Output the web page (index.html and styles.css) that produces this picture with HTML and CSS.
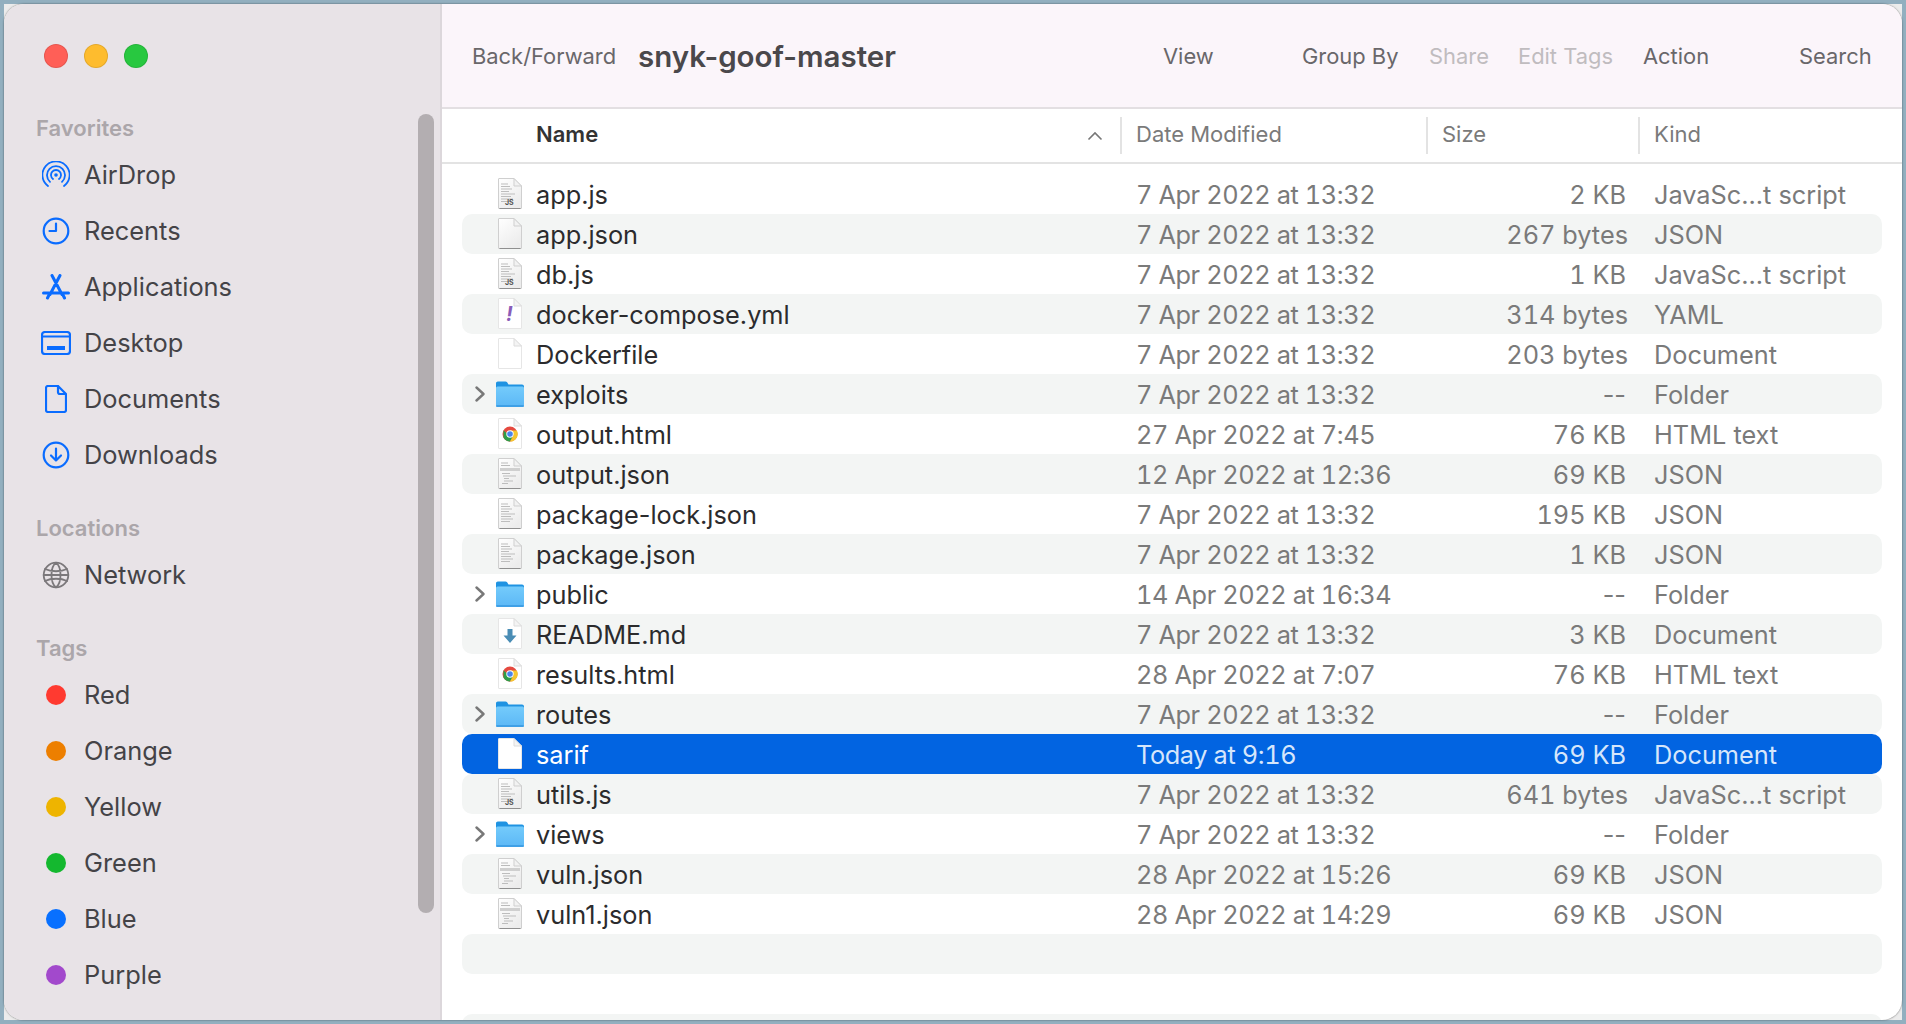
FILE: index.html
```html
<!DOCTYPE html>
<html lang="en">
<head>
<meta charset="utf-8">
<title>snyk-goof-master</title>
<link rel="stylesheet" href="styles.css">
</head>
<body>
<svg class="defs" width="0" height="0" aria-hidden="true">
  <defs>
    <linearGradient id="paper" x1="0" y1="0" x2="0.6" y2="1"><stop offset="0" stop-color="#ffffff"/><stop offset="1" stop-color="#ececec"/></linearGradient>
    <linearGradient id="folderFront" x1="0" y1="0" x2="0" y2="1"><stop offset="0" stop-color="#74cbfb"/><stop offset="1" stop-color="#5cb8f6"/></linearGradient>
    <symbol id="page" viewBox="0 0 24 31">
      <path d="M1 .5H16L23.5 8V30a.5.5 0 0 1-.5.5H1a.5.5 0 0 1-.5-.5V1A.5.5 0 0 1 1 .5Z" fill="url(#paper)" stroke="#cfcfcf"/>
      <path d="M16 .5V8H23.5Z" fill="#f2f2f2" stroke="#cfcfcf" stroke-linejoin="round"/>
      <path d="M1.500 30.500H22.500" stroke="#8f8f8f"/>
    </symbol>
    <symbol id="pagelight" viewBox="0 0 24 31">
      <path d="M1 .5H16L23.5 8V30a.5.5 0 0 1-.5.5H1a.5.5 0 0 1-.5-.5V1A.5.5 0 0 1 1 .5Z" fill="#fff" stroke="#e6e6e6"/>
      <path d="M16 .5V8H23.5Z" fill="#f4f4f4" stroke="#dcdcdc" stroke-linejoin="round"/>
    </symbol>
    <symbol id="folder" viewBox="0 0 28 26">
      <path d="M0 3a2 2 0 0 1 2-2.500H9.500a2 2 0 0 1 1.600.8L12.500 3.500H26a2 2 0 0 1 2 2V10H0Z" fill="#1f93e2"/>
      <rect y="5.500" width="28" height="20" rx="1.500" fill="url(#folderFront)"/>
      <rect y="24" width="28" height="2" rx="1" fill="#3fa0e6"/>
    </symbol>
    <symbol id="chevron" viewBox="0 0 12 16">
      <path d="M2.500 1.500 9.500 8 2.500 14.500" fill="none" stroke="#787878" stroke-width="2.400" stroke-linecap="round" stroke-linejoin="round"/>
    </symbol>
    <symbol id="chrome" viewBox="0 0 24 31">
      <path d="M1 .5H16L23.500 8V30a.5.5 0 0 1-.5.500H1a.5.5 0 0 1-.5-.5V1A.5.5 0 0 1 1 .5Z" fill="#fff" stroke="#e6e6e6"/>
      <path d="M16 .5V8H23.5Z" fill="#f4f4f4" stroke="#dcdcdc" stroke-linejoin="round"/>
      <circle cx="12" cy="16" r="7.500" fill="#e5493f"/>
      <path d="M5.500 12.200 5.500 19.800A7.500 7.500 0 0 0 12 23.500L15.600 17 8.500 15Z" fill="#2e9e49"/>
      <path d="M12 12.500H18.900A7.500 7.500 0 0 1 12 23.500L15.600 17Z" fill="#f6c62f"/>
      <circle cx="12" cy="16" r="3.700" fill="#fff"/>
      <circle cx="12" cy="16" r="2.800" fill="#4a85ee"/>
    </symbol>
    <symbol id="lines" viewBox="0 0 24 31">
      <path d="M3 6h7M3 8.500h9M3 11h11M3 13.500h8M3 16h14M3 18.500h10M3 21h12M3 23.500h9" stroke="#bdbdbd" stroke-width="1" fill="none"/>
    </symbol>
    <symbol id="table" viewBox="0 0 24 31">
      <path d="M3 5h7M3 7.500h9" stroke="#bbb" fill="none"/>
      <rect x="2" y="10" width="20" height="3" fill="#cfcfcf"/>
      <path d="M4 15.500h8M5 18h13M6 20.500h5M6 23h9M4 25.500h6" stroke="#bdbdbd" fill="none"/>
    </symbol>
  </defs>
</svg>
<div class="frame">
<main class="window">
  <aside class="sidebar">
    <div class="lights">
      <span class="light light-close"></span>
      <span class="light light-min"></span>
      <span class="light light-max"></span>
    </div>
    <h2 class="side-label">Favorites</h2>
    <ul class="side-list">
      <li class="side-item"><span class="side-icon"><svg viewBox="0 0 28 28" width="28" height="28" class="glyph glyph-thin"><circle class="solid" cx="14" cy="14" r="1.800"/><path d="M11 18A5 5 0 1 1 17 18M8 20.800A9 9 0 1 1 20 20.800M6 25A13.600 13.600 0 1 1 22 25"/></svg></span>AirDrop</li>
      <li class="side-item"><span class="side-icon"><svg viewBox="0 0 28 28" width="28" height="28" class="glyph"><circle cx="14" cy="14" r="12.300"/><path d="M14 6.500V14H7.500"/></svg></span>Recents</li>
      <li class="side-item"><span class="side-icon"><svg viewBox="0 0 28 26" width="28" height="26" class="glyph glyph-heavy"><path d="M10 1.500 20 20.500M18 1.500 8 20.500M1.500 19H26.500M5.500 24l1.500-3M22.500 24 21 21"/></svg></span>Applications</li>
      <li class="side-item"><span class="side-icon"><svg viewBox="0 0 30 24" width="30" height="24" class="glyph"><rect x="1" y="1" width="28" height="22" rx="3"/><path d="M1 5.500H29" /><rect class="solid" x="6" y="15" width="18" height="4"/></svg></span>Desktop</li>
      <li class="side-item"><span class="side-icon"><svg viewBox="0 0 22 28" width="22" height="28" class="glyph"><path d="M3 1H13L21 9V25a2 2 0 0 1-2 2H3a2 2 0 0 1-2-2V3a2 2 0 0 1 2-2ZM13 1V7a2 2 0 0 0 2 2H21"/></svg></span>Documents</li>
      <li class="side-item"><span class="side-icon"><svg viewBox="0 0 28 28" width="28" height="28" class="glyph"><circle cx="14" cy="14" r="12.300"/><path d="M14 7.500V19.500M9 14.500 14 19.500 19 14.500"/></svg></span>Downloads</li>
    </ul>
    <h2 class="side-label side-label-gap">Locations</h2>
    <ul class="side-list">
      <li class="side-item"><span class="side-icon"><svg viewBox="0 0 28 28" width="28" height="28" class="glyph glyph-grey"><circle cx="14" cy="14" r="12.300"/><path d="M14 1.700C8 6 8 22 14 26.300 20 22 20 6 14 1.700ZM3 8C9 11 19 11 25 8M1.700 14H26.300M3 20C9 17 19 17 25 20"/></svg></span>Network</li>
    </ul>
    <h2 class="side-label side-label-gap">Tags</h2>
    <ul class="side-list">
      <li class="side-item"><span class="side-icon"><span class="dot dot-red"></span></span>Red</li>
      <li class="side-item"><span class="side-icon"><span class="dot dot-orange"></span></span>Orange</li>
      <li class="side-item"><span class="side-icon"><span class="dot dot-yellow"></span></span>Yellow</li>
      <li class="side-item"><span class="side-icon"><span class="dot dot-green"></span></span>Green</li>
      <li class="side-item"><span class="side-icon"><span class="dot dot-blue"></span></span>Blue</li>
      <li class="side-item"><span class="side-icon"><span class="dot dot-purple"></span></span>Purple</li>
    </ul>
    <div class="side-scroll"></div>
  </aside>
  <section class="content">
    <header class="toolbar">
      <span class="tool">Back/Forward</span>
      <span class="title">snyk-goof-master</span>
      <span class="tool">View</span>
      <span class="tool">Group By</span>
      <span class="tool tool-off">Share</span>
      <span class="tool tool-off">Edit Tags</span>
      <span class="tool">Action</span>
      <span class="tool">Search</span>
    </header>
    <div class="columns">
      <div class="col col-name">Name<svg class="sort" viewBox="0 0 16 10" width="16" height="10"><path d="M1.500 8.500 8 2l6.500 6.500" fill="none" stroke="#777" stroke-width="1.600"/></svg></div>
      <div class="col">Date Modified</div>
      <div class="col">Size</div>
      <div class="col">Kind</div>
    </div>
    <div class="rows">
      <div class="row"><span class="lead"><span class="ico"><svg class="doc"><use href="#page"/></svg><svg class="doc over"><use href="#lines"/></svg><span class="badge">JS</span></span></span><span class="name">app.js</span><span class="cell date">7 Apr 2022 at 13:32</span><span class="cell size">2 KB</span><span class="cell kind">JavaSc...t script</span></div>
      <div class="row"><span class="lead"><span class="ico"><svg class="doc"><use href="#page"/></svg></span></span><span class="name">app.json</span><span class="cell date">7 Apr 2022 at 13:32</span><span class="cell size size-bytes">267 bytes</span><span class="cell kind">JSON</span></div>
      <div class="row"><span class="lead"><span class="ico"><svg class="doc"><use href="#page"/></svg><svg class="doc over"><use href="#lines"/></svg><span class="badge">JS</span></span></span><span class="name">db.js</span><span class="cell date">7 Apr 2022 at 13:32</span><span class="cell size">1 KB</span><span class="cell kind">JavaSc...t script</span></div>
      <div class="row"><span class="lead"><span class="ico"><svg class="doc"><use href="#pagelight"/></svg><span class="bang">!</span></span></span><span class="name">docker-compose.yml</span><span class="cell date">7 Apr 2022 at 13:32</span><span class="cell size size-bytes">314 bytes</span><span class="cell kind">YAML</span></div>
      <div class="row"><span class="lead"><span class="ico"><svg class="doc"><use href="#pagelight"/></svg></span></span><span class="name">Dockerfile</span><span class="cell date">7 Apr 2022 at 13:32</span><span class="cell size size-bytes">203 bytes</span><span class="cell kind">Document</span></div>
      <div class="row"><span class="lead"><svg class="chev"><use href="#chevron"/></svg><span class="ico"><svg class="fold"><use href="#folder"/></svg></span></span><span class="name">exploits</span><span class="cell date">7 Apr 2022 at 13:32</span><span class="cell size size-none">--</span><span class="cell kind">Folder</span></div>
      <div class="row"><span class="lead"><span class="ico"><svg class="doc"><use href="#chrome"/></svg></span></span><span class="name">output.html</span><span class="cell date">27 Apr 2022 at 7:45</span><span class="cell size">76 KB</span><span class="cell kind">HTML text</span></div>
      <div class="row"><span class="lead"><span class="ico"><svg class="doc"><use href="#page"/></svg><svg class="doc over"><use href="#table"/></svg></span></span><span class="name">output.json</span><span class="cell date">12 Apr 2022 at 12:36</span><span class="cell size">69 KB</span><span class="cell kind">JSON</span></div>
      <div class="row"><span class="lead"><span class="ico"><svg class="doc"><use href="#page"/></svg><svg class="doc over"><use href="#lines"/></svg></span></span><span class="name">package-lock.json</span><span class="cell date">7 Apr 2022 at 13:32</span><span class="cell size">195 KB</span><span class="cell kind">JSON</span></div>
      <div class="row"><span class="lead"><span class="ico"><svg class="doc"><use href="#page"/></svg><svg class="doc over"><use href="#lines"/></svg></span></span><span class="name">package.json</span><span class="cell date">7 Apr 2022 at 13:32</span><span class="cell size">1 KB</span><span class="cell kind">JSON</span></div>
      <div class="row"><span class="lead"><svg class="chev"><use href="#chevron"/></svg><span class="ico"><svg class="fold"><use href="#folder"/></svg></span></span><span class="name">public</span><span class="cell date">14 Apr 2022 at 16:34</span><span class="cell size size-none">--</span><span class="cell kind">Folder</span></div>
      <div class="row"><span class="lead"><span class="ico"><svg class="doc"><use href="#pagelight"/></svg><svg class="doc over" viewBox="0 0 24 31"><path d="M9.500 11h5v6.500h4L12 25l-6.500-7.500h4Z" fill="#4a8db5"/></svg></span></span><span class="name">README.md</span><span class="cell date">7 Apr 2022 at 13:32</span><span class="cell size">3 KB</span><span class="cell kind">Document</span></div>
      <div class="row"><span class="lead"><span class="ico"><svg class="doc"><use href="#chrome"/></svg></span></span><span class="name">results.html</span><span class="cell date">28 Apr 2022 at 7:07</span><span class="cell size">76 KB</span><span class="cell kind">HTML text</span></div>
      <div class="row"><span class="lead"><svg class="chev"><use href="#chevron"/></svg><span class="ico"><svg class="fold"><use href="#folder"/></svg></span></span><span class="name">routes</span><span class="cell date">7 Apr 2022 at 13:32</span><span class="cell size size-none">--</span><span class="cell kind">Folder</span></div>
      <div class="row row-selected"><span class="lead"><span class="ico"><svg class="doc"><use href="#pagelight"/></svg></span></span><span class="name">sarif</span><span class="cell date">Today at 9:16</span><span class="cell size">69 KB</span><span class="cell kind">Document</span></div>
      <div class="row"><span class="lead"><span class="ico"><svg class="doc"><use href="#page"/></svg><svg class="doc over"><use href="#lines"/></svg><span class="badge">JS</span></span></span><span class="name">utils.js</span><span class="cell date">7 Apr 2022 at 13:32</span><span class="cell size size-bytes">641 bytes</span><span class="cell kind">JavaSc...t script</span></div>
      <div class="row"><span class="lead"><svg class="chev"><use href="#chevron"/></svg><span class="ico"><svg class="fold"><use href="#folder"/></svg></span></span><span class="name">views</span><span class="cell date">7 Apr 2022 at 13:32</span><span class="cell size size-none">--</span><span class="cell kind">Folder</span></div>
      <div class="row"><span class="lead"><span class="ico"><svg class="doc"><use href="#page"/></svg><svg class="doc over"><use href="#table"/></svg></span></span><span class="name">vuln.json</span><span class="cell date">28 Apr 2022 at 15:26</span><span class="cell size">69 KB</span><span class="cell kind">JSON</span></div>
      <div class="row"><span class="lead"><span class="ico"><svg class="doc"><use href="#page"/></svg><svg class="doc over"><use href="#table"/></svg></span></span><span class="name">vuln1.json</span><span class="cell date">28 Apr 2022 at 14:29</span><span class="cell size">69 KB</span><span class="cell kind">JSON</span></div>
      <div class="row"></div>
      <div class="row"></div>
      <div class="row"></div>
    </div>
  </section>
</main>
</div>
</body>
</html>
```

FILE: styles.css
```css
* { box-sizing: border-box; }
html, body { height: 100%; }
body {
  margin: 0;
  padding: 4px;
  background: #92afbf;
  font-family: Inter, "Liberation Sans", sans-serif;
  overflow: hidden;
}
.defs { position: absolute; }
.frame { height: 1016px; background: #ececec; }
.window {
  display: flex;
  height: 100%;
  border-radius: 20px;
  overflow: hidden;
  background: #fff;
  box-shadow: 0 0 2px rgba(0,0,0,.55);
}

/* Sidebar */
.sidebar {
  position: relative;
  flex: 0 0 438px;
  padding-top: 40px;
  background: #e8e3e7;
  border-right: 2px solid #dcd7db;
}
.lights { display: flex; gap: 16px; padding-left: 40px; margin-bottom: 46px; }
.light { width: 24px; height: 24px; border-radius: 50%; border: 1px solid rgba(0,0,0,.1); }
.light-close { background: #ff5f57; }
.light-min { background: #febc2e; }
.light-max { background: #28c840; }
.side-label {
  margin: 0 0 5px;
  padding-left: 32px;
  font-size: 22px;
  line-height: 28px;
  font-weight: 600;
  color: #aba6aa;
}
.side-label-gap { margin-top: 31px; }
.side-list { list-style: none; margin: 0; padding: 0; }
.side-item {
  display: flex;
  align-items: center;
  height: 56px;
  padding-left: 36px;
  padding-bottom: 1px;
  font-size: 25.4px;
  color: #444347;
}
.side-icon { display: flex; align-items: center; justify-content: center; width: 32px; margin-right: 12px; }
.glyph { fill: none; stroke: #0a6cff; stroke-width: 2.200; stroke-linecap: round; stroke-linejoin: round; }
.glyph-thin { stroke-width: 1.800; }
.glyph-heavy { stroke-width: 3; }
.glyph-grey { stroke: #7b787b; stroke-width: 1.800; }
.glyph .solid { fill: #0a6cff; stroke: none; }
.dot { width: 20px; height: 20px; border-radius: 50%; }
.dot-red { background: #ff3a30; }
.dot-orange { background: #ed7f00; }
.dot-yellow { background: #eeb400; }
.dot-green { background: #14b82f; }
.dot-blue { background: #0870ff; }
.dot-purple { background: #a249cc; }
.side-scroll {
  position: absolute;
  left: 414px;
  top: 110px;
  width: 16px;
  height: 799px;
  border-radius: 8px;
  background: #b3aeb1;
}

/* Content */
.content { flex: 1; display: flex; flex-direction: column; min-width: 0; }
.toolbar {
  display: grid;
  grid-template-columns: 166px 525px 139px 127px 89px 125px 156px 1fr;
  align-items: center;
  flex: 0 0 105px;
  padding-left: 30px;
  background: #fbf5fa;
  border-bottom: 2px solid #e3dfe2;
}
.tool { font-size: 21.9px; color: #69676a; white-space: nowrap; }
.tool-off { color: #c0bcbf; }
.title { font-size: 29.5px; font-weight: 600; color: #4a484b; white-space: nowrap; }
.columns {
  display: grid;
  grid-template-columns: 678px 306px 212px 1fr;
  align-items: center;
  flex: 0 0 55px;
  border-bottom: 2px solid #e3e3e3;
}
.col {
  height: 37px;
  padding-left: 14px;
  border-left: 2px solid #e3e3e3;
  font-size: 22px;
  line-height: 34px;
  color: #7a7a7a;
}
.col-name {
  display: flex;
  align-items: center;
  justify-content: space-between;
  padding-left: 94px;
  padding-right: 17px;
  padding-bottom: 3px;
  border-left: 0;
  font-weight: 600;
  color: #333;
}
.sort { margin-top: 3px; }
.rows { flex: 1; padding: 10px 20px 0 20px; overflow: hidden; }
.row {
  display: grid;
  grid-template-columns: 74px 600px 291px 199px 1fr;
  align-items: center;
  height: 40px;
  border-radius: 10px;
  font-size: 25.3px;
  color: #7a7a7a;
  white-space: nowrap;
}
.row:nth-child(even) { background: #f3f5f4; }
.row.row-selected { background: #0264e1; color: #d6e6fb; }
.row-selected .name { color: #fff; }
.name, .cell { padding-top: 1px; }
.date { font-feature-settings: "tnum"; letter-spacing: -.38px; }
.lead { position: relative; display: block; height: 40px; }
.chev { position: absolute; left: 12px; top: 12px; width: 12px; height: 16px; }
.ico { position: absolute; left: 34px; top: 0; width: 28px; height: 40px; display: block; }
.doc { position: absolute; left: 2px; top: 4px; width: 24px; height: 31px; }
.fold { position: absolute; left: 0; top: 7px; width: 28px; height: 26px; }
.badge {
  position: absolute;
  left: 9px;
  top: 25px;
  font-size: 7px;
  line-height: 8px;
  font-weight: 700;
  color: #555;
}
.bang {
  position: absolute;
  left: 10px;
  top: 9px;
  font-size: 20px;
  line-height: 22px;
  font-style: italic;
  font-weight: 700;
  color: #8a5cb8;
}
.name { color: #2b2b2d; }
.size { text-align: right; font-feature-settings: "tnum"; }
.size-none { font-feature-settings: normal; }
.size-bytes { margin-right: -2px; }
.kind { padding-left: 28px; }
```
